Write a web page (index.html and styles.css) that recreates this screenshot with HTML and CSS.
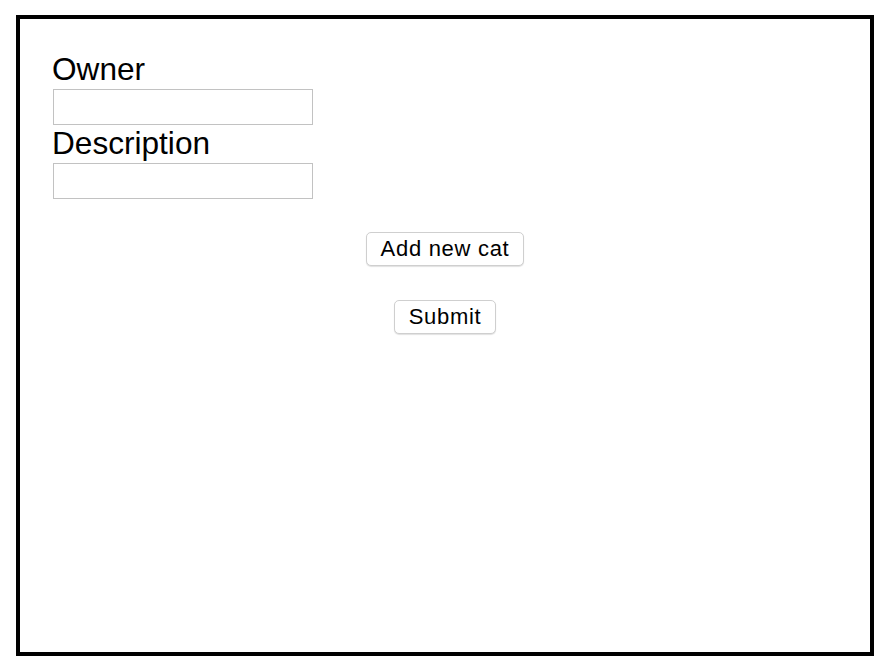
FILE: index.html
```html
<!DOCTYPE html>
<html>
<head>
<meta charset="utf-8">
<link rel="stylesheet" href="styles.css">
</head>
<body>
<div class="frame">
  <form class="form">
    <div class="fields">
      <label class="label">Owner</label>
      <input class="field" type="text">
      <label class="label">Description</label>
      <input class="field" type="text">
    </div>
    <div class="actions">
      <button type="button" class="btn">Add new cat</button>
      <button type="button" class="btn">Submit</button>
    </div>
  </form>
</div>
</body>
</html>
```
FILE: styles.css
```css
html, body {
  margin: 0;
  padding: 0;
  background: #fff;
}
body {
  font-family: "Liberation Sans", Arial, sans-serif;
  color: #000;
}
.frame {
  margin: 15px 0 0 16px;
  width: 850px;
  height: 633px;
  border: 4px solid #000;
}
.form {
  padding: 32px 32px 0 33px;
}
.fields {
  display: flex;
  flex-direction: column;
  align-items: flex-start;
}
.label {
  font-size: 31.6px;
  line-height: 36px;
  height: 38px;
  margin-left: -1px;
}
.field {
  box-sizing: border-box;
  width: 260px;
  height: 36px;
  margin: 0;
  border: 1px solid #c2c2c2;
  background: #fff;
  padding: 0 4px;
  font-size: 16px;
}
.actions {
  display: flex;
  flex-direction: column;
  align-items: center;
  gap: 34px;
  margin-top: 33px;
  margin-left: -33px;
  margin-right: -32px;
}
.btn {
  box-sizing: border-box;
  height: 34px;
  padding: 0 14px;
  font-family: "Liberation Sans", Arial, sans-serif;
  font-size: 22px;
  letter-spacing: 0.7px;
  color: #000;
  background: #fff;
  border: 1px solid #cfcfcf;
  border-radius: 5px;
  box-shadow: 0 1px 1px rgba(0,0,0,0.12);
}
```
